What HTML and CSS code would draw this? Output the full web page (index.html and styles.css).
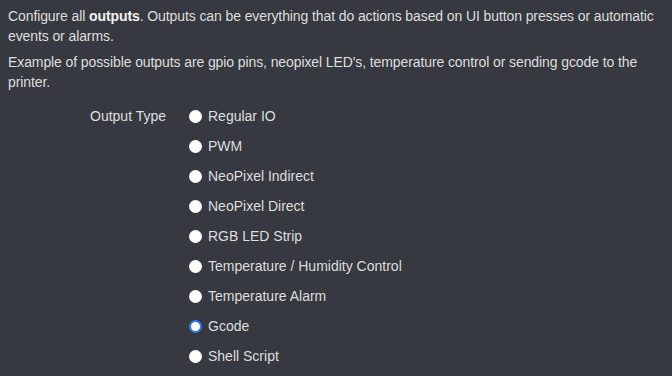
FILE: index.html
```html
<!DOCTYPE html>
<html>
<head>
<meta charset="utf-8">
<link rel="stylesheet" href="styles.css">
</head>
<body>
<p class="intro">Configure all <b>outputs</b>. Outputs can be everything that do actions based on UI button presses or automatic events or alarms.</p>
<p class="intro">Example of possible outputs are gpio pins, neopixel LED's, temperature control or sending gcode to the printer.</p>
<div class="form-row">
  <div class="label">Output Type</div>
  <div class="options">
    <label class="opt"><input type="radio" name="t"><span>Regular IO</span></label>
    <label class="opt"><input type="radio" name="t"><span>PWM</span></label>
    <label class="opt"><input type="radio" name="t"><span>NeoPixel Indirect</span></label>
    <label class="opt"><input type="radio" name="t"><span>NeoPixel Direct</span></label>
    <label class="opt"><input type="radio" name="t"><span>RGB LED Strip</span></label>
    <label class="opt"><input type="radio" name="t"><span>Temperature / Humidity Control</span></label>
    <label class="opt"><input type="radio" name="t"><span>Temperature Alarm</span></label>
    <label class="opt"><input type="radio" name="t" checked><span>Gcode</span></label>
    <label class="opt"><input type="radio" name="t"><span>Shell Script</span></label>
  </div>
</div>
</body>
</html>
```
FILE: styles.css
```css
html, body {
  background: #363940;
}
body {
  margin: 0;
  padding: 6px 0 0 8px;
  font-family: "Liberation Sans", Arial, sans-serif;
  font-size: 14px;
  line-height: 20px;
  color: #dedede;
}
.intro {
  margin: 0 0 6px 0;
  letter-spacing: -0.1px;
}
.intro b {
  font-weight: bold;
  color: #f2f2f2;
}
.form-row {
  display: flex;
  margin-top: 14px;
}
.label {
  width: 181px;
  box-sizing: border-box;
  padding-left: 82px;
  line-height: 20px;
}
.options {
  display: flex;
  flex-direction: column;
  gap: 10px;
}
.opt {
  display: flex;
  align-items: center;
  height: 20px;
}
.opt input {
  appearance: none;
  -webkit-appearance: none;
  margin: 0 6px 0 0;
  width: 13px;
  height: 13px;
  border-radius: 50%;
  background: #ffffff;
  flex: none;
}
.opt input:checked {
  background: #ffffff;
  border: 2px solid #2f7bf5;
  box-sizing: border-box;
}
```
